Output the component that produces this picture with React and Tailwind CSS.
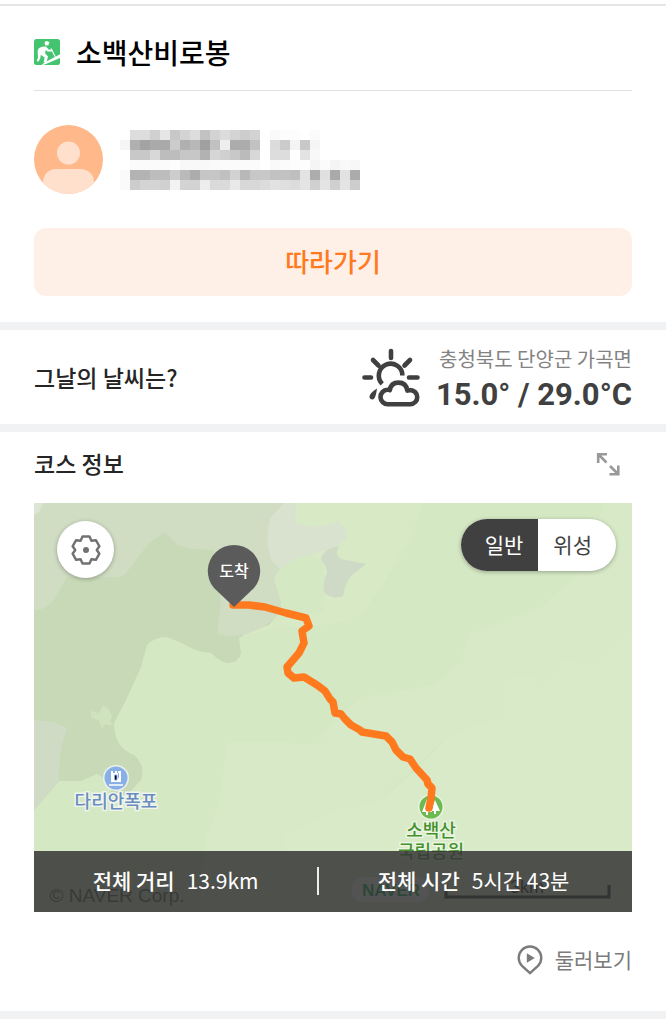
import React, { useState } from 'react';

// 10px shade cells that hide the user's name and the date line
const mosaicRows = [
  ['fff', 'ddd', 'ddd', 'd0d0d0', 'e6e6e6', 'c8c8c8', 'd3d3d3', 'ddd', 'c2c2c2', 'd3d3d3', 'dcdcdc', 'd4d4d4', 'cdcdcd', 'd3d3d3', 'fff', 'fafafa', 'fdfdfd', 'fdfdfd', 'fff', 'fbfbfb'],
  ['f5f5f5', 'b0b0b0', 'a3a3a3', 'aaa', 'a9a9a9', 'ccc', 'b0b0b0', 'b8b8b8', 'a0a0a0', 'c1c1c1', 'eee', 'acacac', 'acacac', 'c2c2c2', 'fff', 'dcdcdc', 'cbcbcb', 'f4f4f4', 'c8c8c8', 'f5f5f5'],
  ['fff', 'c8c8c8', 'c8c8c8', 'd8d8d8', 'bdbdbd', 'bdbdbd', 'c7c7c7', 'c7c7c7', 'b2b2b2', 'd6d6d6', 'd0d0d0', 'c8c8c8', 'bbb', 'd8d8d8', 'fff', 'ddd', 'ddd', 'fff', 'e3e3e3', 'f8f8f8'],
  ['fff', 'fbfbfb', 'fbfbfb', 'fbfbfb', 'fbfbfb', 'fdfdfd', 'f8f8f8', 'f8f8f8', 'f8f8f8', 'fafafa', 'fbfbfb', 'fbfbfb', 'fbfbfb', 'fbfbfb', 'fff', 'f9f9f9', 'fbfbfb', 'fdfdfd', 'fdfdfd', 'f5f5f5', 'fbfbfb', 'f4f4f4', 'f9f9f9', 'f7f7f7'],
  ['fafafa', 'b3b3b3', 'b3b3b3', 'bdbdbd', 'bdbdbd', 'cdcdcd', 'bababa', 'acacac', 'c6c6c6', 'c6c6c6', 'c0c0c0', 'd2d2d2', 'b8b8b8', 'c7c7c7', 'c8c8c8', 'c2c2c2', 'c2c2c2', 'bfbfbf', 'e3e3e3', 'adadad', 'e0e0e0', 'aaa', 'e2e2e2', 'ababab'],
  ['fafafa', 'cdcdcd', 'd4d4d4', 'd4d4d4', 'd0d0d0', 'f3f3f3', 'd3d3d3', 'd3d3d3', 'ededed', 'dadada', 'dadada', 'e9e9e9', 'd8d8d8', 'd8d8d8', 'dcdcdc', 'e2e2e2', 'dfdfdf', 'dcdcdc', 'e4e4e4', 'd0d0d0', 'e4e4e4', 'd0d0d0', 'e4e4e4', 'cdcdcd'],
];

const Mosaic = () => (
  <svg width="240" height="60" viewBox="0 0 240 60" shapeRendering="crispEdges" aria-hidden="true">
    {mosaicRows.map((row, y) =>
      row.map((shade, x) => (
        <rect key={`${x}-${y}`} x={x * 10} y={y * 10} width="10" height="10" fill={`#${shade}`} />
      ))
    )}
  </svg>
);

const HikerIcon = () => (
  <svg width="26" height="26" viewBox="0 0 26 26" aria-hidden="true">
    <rect width="26" height="26" rx="2.5" fill="#45c46f" />
    <circle cx="12.8" cy="4.4" r="2.2" fill="#fff" />
    <path d="M10.2 2.4l5.8.6-1.4 1.2z" fill="#fff" />
    <path d="M4.600 9.400Q8 6.800 12 7.600l2.600 3 3.800.2v1.800l-4.800-.2-1.800-1.400-.8 3.200 3 3.400-1.600 6-2.800-.4 1-4.800-3.800-2.600-.6 4-2.200 3.200-1.200-1.400 1.200-3-.2-3.600Q2.800 12.400 4.600 9.400z" fill="#fff" />
    <path d="M17 9.400l4.200 8.400" stroke="#fff" strokeWidth="1.100" />
    <path d="M7.600 26l3-2.600L26 15.200v3.800L12.600 24.800 9 26z" fill="#fff" />
  </svg>
);

const Avatar = () => (
  <svg width="69" height="69" viewBox="0 0 69 69" role="img" aria-label="프로필">
    <defs>
      <clipPath id="avatarClip">
        <circle cx="34.5" cy="34.5" r="34.5" />
      </clipPath>
    </defs>
    <g clipPath="url(#avatarClip)">
      <rect width="69" height="69" fill="#ffb88a" />
      <circle cx="34.5" cy="28" r="11.5" fill="#fee0cd" />
      <rect x="9" y="44" width="51" height="40" rx="13" fill="#fee0cd" />
    </g>
  </svg>
);

const WeatherIcon = () => (
  <svg width="58" height="59" viewBox="0 0 58 59" fill="none" stroke="#404041" strokeWidth="4.6" strokeLinecap="round" aria-hidden="true">
    <path d="M29 3v7M2.5 29.5H9M47 29.5h8.5M11 12l5.5 5.500M48 12l-5.500 5.500" />
    <path d="M20.200 35.800A11.800 11.800 0 1 1 40.400 27.400" strokeLinecap="butt" />
    <path d="M26 56.200a7.200 7.200 0 0 1-.6-14.400q1.400-.1 2.400.3C28.600 37 32.200 34.600 36.600 34.600c4.600 0 8 2.800 8.800 8 .8-.3 1.600-.5 2.600-.5a7.050 7.050 0 0 1 .4 14.100z" strokeLinejoin="round" />
    <path d="M15 40.500q-7.400 4.600-7.600 8.400a2.800 2.800 0 0 0 4.900 1.600q1.700-2.400 2.700-10z" fill="#404041" stroke="none" />
  </svg>
);

const ExpandIcon = () => (
  <svg width="24" height="24" viewBox="0 0 24 24" fill="none" stroke="#999" strokeWidth="2.6" aria-hidden="true">
    <path d="M2.200 11V2.200H11M2.500 2.500l8 8M22.300 13.500v8.800H13.500M22 22l-8-8" />
  </svg>
);

const GearIcon = () => (
  <svg width="32" height="32" viewBox="-16 -16 32 32" fill="none" stroke="#717171" strokeWidth="2.4" strokeLinejoin="round" aria-hidden="true">
    <path d="M-3.500-13.500H3.500L5.400-9.300 9.900-9.800 13.400-3.700 10.750 0 13.400 3.700 9.900 9.800 5.400 9.300 3.500 13.500H-3.500L-5.400 9.300-9.900 9.800-13.400 3.700-10.750 0-13.400-3.700-9.900-9.800-5.400-9.300Z" />
    <circle r="3" fill="#717171" stroke="none" />
  </svg>
);

const TourIcon = () => (
  <svg width="26" height="30" viewBox="0 0 26 30" fill="none" aria-hidden="true">
    <path d="M13 28.200L5 20.800A11.300 11.300 0 1 1 21 20.800Z" stroke="#7b7b7b" strokeWidth="2.400" />
    <path d="M9.800 8.300v9.400l8-4.700z" fill="#7b7b7b" />
  </svg>
);

const CourseMap = () => (
  <svg
    className="block w-full h-[409px] font-['Noto_Sans_CJK_KR',sans-serif] font-medium"
    viewBox="0 0 598 409"
    preserveAspectRatio="xMidYMid slice"
    textAnchor="middle"
    role="img"
    aria-label="코스 지도"
  >
    <rect width="598" height="409" fill="#d4e8c3" />

    {/* Terrain */}
    <path d="M450 0H598V127L560 162 530 155 510 184 500 174 472 174 467 214 417 230 343 299 300 307V409H165L172 335 185 300 193 240 233 238 283 242 300 215 330 194 400 182 425 160 437 130 507 104 545 70 570 0Z" fill="#d7e9c6" />
    <path d="M598 127L560 162 530 155 510 184 500 174 472 174 467 214 417 230 380 270 343 299 300 307 270 325 250 330 250 409H598Z" fill="#d9eac8" />
    <path d="M235 0H390L376 35 350 80 325 115 300 121 240 125 200 135Z" fill="#d8e9c5" />
    <path d="M0 0H250L235 45 240 75 248 95Q250 105 235 122 215 128 205 135L207 150Q205 160 193 160 185 158 177 150 165 149 157 145 145 138 133 134 120 134 113 142L107 164 92 197 80 220Q80 245 100 252 112 262 107 277L93 292 78 290Q70 273 63 271L47 278 25 278 0 307Z" fill="#c7d9b7" />
    <path d="M0 0H262L240 45Q252 82 248 96 250 110 235 120 210 138 183 131L187 100 180 47 157 46 143 42 131 29 115 40 92 70Q85 76 77 74L33 74 20 97Q12 107 0 107Z" fill="#d0ddc3" />
    <path d="M250 0L236 15Q230 40 238 58 248 72 262 61 280 48 298 46L312 36 311 24Q302 20 298 0Z" fill="#d8e2cf" />
    <path d="M262 0L261 20Q280 27 300 20L330 0Z" fill="#d8e9c5" />
    <path d="M266 54Q244 64 240 76L245 92Q252 106 236 121L290 108V60Q280 51 266 54Z" fill="#d5e8c4" />
    <path d="M306 43Q289 45 287 57 293 62 293 70 288 80 290 90 300 97 309 93 312 78 317 73L332 61 307 56Q299 50 306 43Z" fill="#ced9c6" />
    <path d="M0 217L20 219 33 225Q24 250 25 277L0 307Z" fill="#d0dbc5" />
    <path d="M0 0H9L5 9 0 12Z" fill="#dde5d4" />
    <path d="M57 208l8 2 4-8 6 4 3 8-2 4 3 4-9 0-2 4-3-8-8-4z" fill="#d0e3bf" />

    {/* Places */}
    <circle cx="82" cy="275" r="13" fill="#eaf3ec" />
    <circle cx="82" cy="275" r="11.5" fill="#89b0e6" />
    <path d="M77 268h2v2h2v-2h2v2h1v-2h3v11H77z" fill="#fff" />
    <path d="M80.500 272h2.500v5h-2.500zM84.500 270v5" stroke="#89b0e6" strokeWidth="1" />
    <path d="M75 282h14" stroke="#fff" strokeWidth="1.500" />
    <text x="82" y="305" fontSize="18" fill="#6b8cc0" stroke="#eef5ec" strokeWidth="3" paintOrder="stroke">다리안폭포</text>

    <circle cx="397" cy="304" r="13" fill="#e8f3df" />
    <circle cx="397" cy="304" r="11.5" fill="#6dbb50" />
    <path d="M393 296l-5 13h4v3h2v-3h4zM401 297l-4 11h3v3h2v-3h4z" fill="#fff" />
    <text x="397" y="334" fontSize="18" fill="#47912d" stroke="#eaf5e2" strokeWidth="3" paintOrder="stroke">소백산</text>
    <text x="397" y="355" fontSize="18" fill="#47912d" stroke="#eaf5e2" strokeWidth="3" paintOrder="stroke">국립공원</text>

    {/* Attribution and scale */}
    <g className="font-['Liberation_Sans',sans-serif]">
      <text x="83" y="399" fontSize="19" fontWeight="400" fill="#555">© NAVER Corp.</text>
      <rect x="318" y="374" width="77" height="25" rx="12" fill="#fff" />
      <text x="357" y="393" fontSize="17" fontWeight="700" fill="#03a84e">NAVER</text>
      <text x="493" y="390" fontSize="18" fontWeight="400" fill="#222">3km</text>
      <path d="M412 382v12h163v-12" fill="none" stroke="#222" strokeWidth="3" />
    </g>

    {/* Track */}
    <path
      d="M199 102L215 102 231 104 252 110 272 115 275 123 268 128 270 140 265 150 253 164 254 170 260 175 270 174 283 182 291 188 296 196 299 199 301 210 307 211 311 216 317 222 326 227 328 229 352 233 358 239 362 247 369 254 376 256 382 265 393 277 394 281 398 285 397 295 395 305"
      fill="none"
      stroke="#ff7a1f"
      strokeWidth="7.5"
      strokeLinejoin="round"
      strokeLinecap="round"
    />
    <path d="M200 104L180 85A26.200 26.200 0 1 1 220 85Z" fill="#5b5b5b" />
    <text x="200" y="74" fontSize="16" fill="#fff">도착</text>
  </svg>
);

const Divider = () => <div className="h-2 bg-[#f1f2f4]" />;

const App = () => {
  const [mapType, setMapType] = useState('normal');

  return (
    <div className="bg-white text-[#252525] font-['Noto_Sans_CJK_KR',sans-serif]">
      <div className="pt-1">
        <div className="h-[2px] bg-[#e6e6e6]" />
      </div>

      <section className="px-[34px] pt-6 pb-[26px]">
        <header className="flex items-center gap-4 h-[61px] pb-4 border-b border-[#e0e0e0]">
          <HikerIcon />
          <h1 className="text-[28px] leading-[44px] font-medium text-black">소백산비로봉</h1>
        </header>

        <div className="flex items-center mt-[34px] gap-[17px]">
          <Avatar />
          <Mosaic />
        </div>

        <button
          type="button"
          className="mt-[34px] w-full h-[68px] pb-1 rounded-xl bg-[#fff0e7] text-[#ff7a1f] text-[26px] font-medium"
        >
          따라가기
        </button>
      </section>

      <Divider />

      <section className="flex items-center justify-between h-[94px] px-[34px]">
        <h2 className="text-[23px] font-medium">그날의 날씨는?</h2>
        <div className="flex items-center gap-4">
          <WeatherIcon />
          <div className="text-right">
            <p className="text-[20px] leading-9 text-[#838383]">충청북도 단양군 가곡면</p>
            <p className="font-[Roboto] text-[31px] leading-9 font-bold text-[#404041]">15.0° / 29.0°C</p>
          </div>
        </div>
      </section>

      <Divider />

      <section className="px-[34px]">
        <div className="flex items-center justify-between h-[71px] pb-2 pr-3">
          <h2 className="text-[23px] font-medium">코스 정보</h2>
          <button type="button" aria-label="지도 크게 보기">
            <ExpandIcon />
          </button>
        </div>

        <div className="relative overflow-hidden">
          <CourseMap />

          <button
            type="button"
            aria-label="지도 설정"
            className="absolute top-[18px] left-[23px] flex items-center justify-center size-[57px] rounded-full bg-white shadow-[0_1px_4px_rgba(0,0,0,0.3)]"
          >
            <GearIcon />
          </button>

          <div className="absolute top-4 right-4 flex h-[52px] rounded-full overflow-hidden bg-white text-[21px] shadow-[0_1px_4px_rgba(0,0,0,0.3)]">
            <button
              type="button"
              onClick={() => setMapType('normal')}
              className={`pl-6 pr-[15px] ${mapType === 'normal' ? 'bg-[#404040] text-white' : 'text-[#404040]'}`}
            >
              일반
            </button>
            <button
              type="button"
              onClick={() => setMapType('satellite')}
              className={`pl-[15px] pr-6 ${mapType === 'satellite' ? 'bg-[#404040] text-white' : 'text-[#404040]'}`}
            >
              위성
            </button>
          </div>

          <dl className="absolute inset-x-0 bottom-0 flex items-center h-[61px] pr-1 pb-[2px] bg-[#353535]/85 text-white text-[21px]">
            <div className="flex flex-auto justify-center gap-3">
              <dt className="font-medium">전체 거리</dt>
              <dd>13.9km</dd>
            </div>
            <div className="w-[2px] h-7 bg-white/90" />
            <div className="flex flex-auto justify-center gap-3">
              <dt className="font-medium">전체 시간</dt>
              <dd>5시간 43분</dd>
            </div>
          </dl>
        </div>

        <div className="flex items-center justify-end h-[99px] pb-1">
          <a href="#tour" className="flex items-center gap-3 text-[21px] text-[#7b7b7b]">
            <TourIcon />
            둘러보기
          </a>
        </div>
      </section>

      <Divider />
    </div>
  );
};

export default App;
